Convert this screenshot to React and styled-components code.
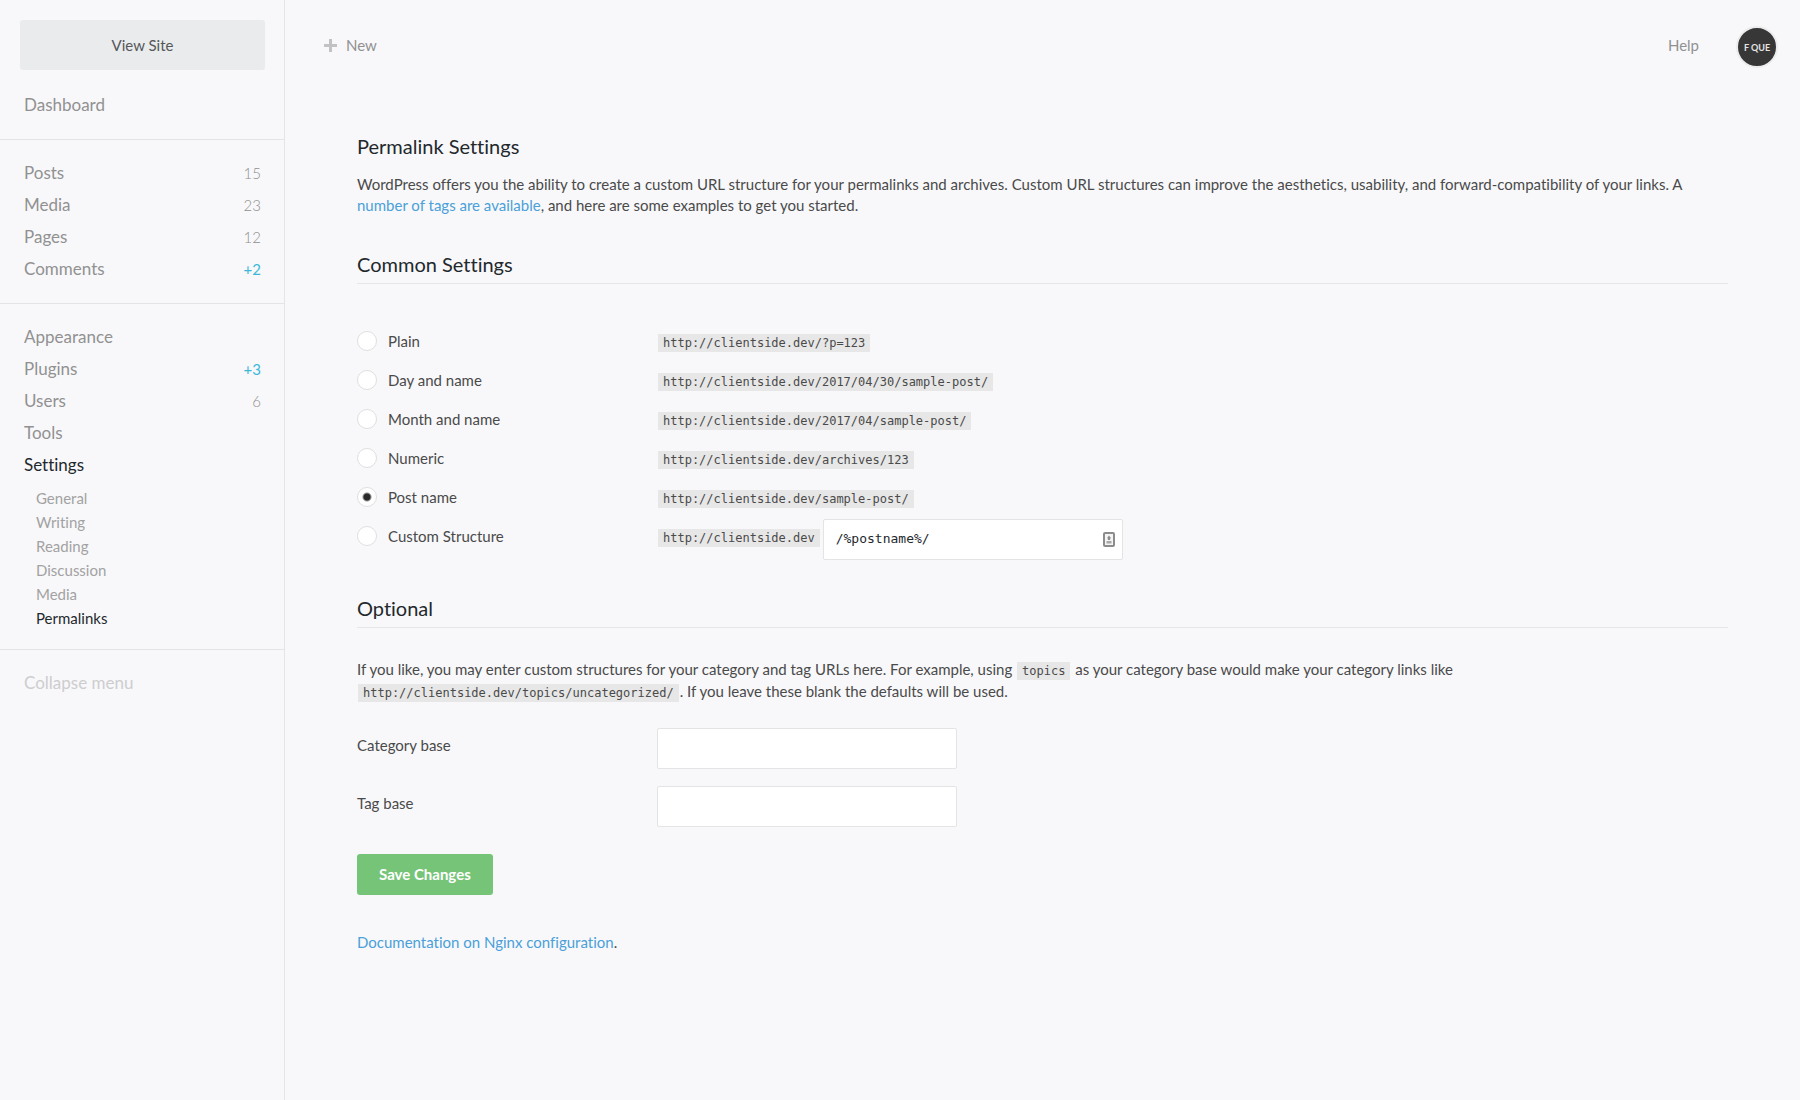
import React, { useState } from "react";
import styled, { createGlobalStyle } from "styled-components";

const sans = `Lato, "Open Sans", sans-serif`;
const mono = `"DejaVu Sans Mono", "Liberation Mono", monospace`;

const GlobalStyle = createGlobalStyle`
  *, *::before, *::after { box-sizing: border-box; }
  body {
    margin: 0;
    background: #f8f8fa;
    color: #4a4a4a;
    font: 400 15px/21px ${sans};
    font-variant-ligatures: none;
  }
`;

const Page = styled.div`
  display: flex;
  min-height: 100vh;
`;

const Sidebar = styled.aside`
  flex: 0 0 285px;
  padding-top: 20px;
  border-right: 1px solid #e3e4e6;
`;

const ViewSite = styled.a`
  display: block;
  margin: 0 19px 0 20px;
  border-radius: 3px;
  background: #e9ebec;
  color: #555759;
  line-height: 50px;
  text-align: center;
  text-decoration: none;
`;

const Menu = styled.nav`
  padding-top: 2px;
`;

const MenuSection = styled.ul`
  margin: 0;
  padding: 17px 23px 18px 24px;
  list-style: none;

  & + & {
    border-top: 1px solid #e3e4e6;
  }
`;

const MenuLink = styled.a`
  display: flex;
  justify-content: space-between;
  color: ${(p) => (p.$active ? "#23282d" : p.$faint ? "#cdcdcf" : "#919191")};
  font-size: 17px;
  line-height: 32px;
  text-decoration: none;
`;

const Count = styled.span`
  color: ${(p) => (p.$alert ? "#3bb8d8" : "#8f8f8f")};
  font-size: 15px;
  font-weight: ${(p) => (p.$alert ? 400 : 300)};
`;

const SubMenu = styled.ul`
  margin: 0;
  padding: 5px 0 1px 12px;
  list-style: none;
`;

const SubLink = styled.a`
  display: block;
  color: ${(p) => (p.$active ? "#23282d" : "#a2a2a2")};
  line-height: 24px;
  text-decoration: none;
`;

const Main = styled.div`
  flex: 1;
  min-width: 0;
`;

const TopBar = styled.header`
  display: flex;
  align-items: center;
  height: 94px;
  padding: 0 22px 0 39px;
`;

const TopLink = styled.a`
  display: flex;
  align-items: center;
  gap: 9px;
  padding-bottom: 4px;
  color: #919191;
  text-decoration: none;
`;

const TopRight = styled.div`
  display: flex;
  align-items: center;
  gap: 37px;
  margin-left: auto;
`;

const Avatar = styled.a`
  display: grid;
  place-items: center;
  width: 42px;
  height: 42px;
  border: 2px solid #ececee;
  border-radius: 50%;
  background: #373737;
  color: #e4e4e4;
  font-size: 9px;
  font-weight: 700;
  text-decoration: none;
`;

const Content = styled.form`
  padding: 38px 72px 60px;
`;

const Title = styled.h1`
  margin: 0 0 14px;
  color: #23282d;
  font-size: 20px;
  font-weight: 400;
  line-height: 28px;
`;

const SectionTitle = styled(Title).attrs({ as: "h2" })`
  margin: 34px 0 0;
  padding-bottom: 5px;
  border-bottom: 1px solid #e5e6e8;
`;

const Text = styled.p`
  margin: 0;
`;

const CodeText = styled(Text)`
  margin: 30px 0 26px;
  line-height: 22px;
`;

const Link = styled.a`
  color: #4aa0d8;
  text-decoration: none;
`;

const Code = styled.code`
  margin: 0 1px;
  padding: 2px 5px;
  background: #e7e7e7;
  color: #4a4a4a;
  font: 12px ${mono};
`;

const Options = styled.div`
  padding-top: 38px;
`;

const OptionRow = styled.div`
  display: grid;
  grid-template-columns: 300px 1fr;
  line-height: 39px;
`;

const OptionLabel = styled.label`
  display: flex;
  align-items: center;
  align-self: start;
  gap: 11px;
`;

const Radio = styled.input.attrs({ type: "radio" })`
  appearance: none;
  width: 20px;
  height: 20px;
  margin: 0 0 2px;
  border: 1px solid #dedfe1;
  border-radius: 50%;
  background: #fff;

  &:checked {
    background: radial-gradient(circle, #2b2b2b 3px, #fff 5px);
  }
`;

const Structure = styled.div`
  display: flex;
  align-items: flex-start;
  gap: 2px;
`;

const TextInput = styled.input.attrs({ type: "text" })`
  width: 300px;
  height: 41px;
  padding: 0 12px 2px;
  border: 1px solid #e3e4e6;
  border-radius: 2px;
  background: #fff;
  color: #23282d;
  font: 13px ${mono};
`;

const InputWrap = styled.div`
  position: relative;
  display: flex;
  padding-top: 2px;
`;

const FillIcon = styled.svg`
  position: absolute;
  top: 15px;
  right: 8px;
`;

const Field = styled.div`
  display: grid;
  grid-template-columns: 300px 1fr;
  margin-bottom: 17px;
`;

const FieldLabel = styled.label`
  line-height: 34px;
`;

const Save = styled.button`
  display: block;
  height: 41px;
  margin: 27px 0 37px;
  padding: 0 22px 2px;
  border: 0;
  border-radius: 3px;
  background: #76c478;
  color: #fff;
  font: 700 15px ${sans};
`;

const contentMenu = [
  { name: "Posts", count: "15" },
  { name: "Media", count: "23" },
  { name: "Pages", count: "12" },
  { name: "Comments", count: "+2" },
];

const adminMenu = [
  { name: "Appearance" },
  { name: "Plugins", count: "+3" },
  { name: "Users", count: "6" },
  { name: "Tools" },
  { name: "Settings", active: true },
];

const settingsMenu = ["General", "Writing", "Reading", "Discussion", "Media", "Permalinks"];

const structures = [
  { name: "Plain", path: "/?p=123" },
  { name: "Day and name", path: "/2017/04/30/sample-post/" },
  { name: "Month and name", path: "/2017/04/sample-post/" },
  { name: "Numeric", path: "/archives/123" },
  { name: "Post name", path: "/sample-post/" },
  { name: "Custom Structure", path: "", custom: true },
];

function MenuItem({ item, children }) {
  return (
    <li>
      <MenuLink href="#" $active={item.active}>
        {item.name}
        {item.count && <Count $alert={item.count.startsWith("+")}>{item.count}</Count>}
      </MenuLink>
      {children}
    </li>
  );
}

export default function App() {
  const [selected, setSelected] = useState("Post name");

  return (
    <>
      <GlobalStyle />
      <Page>
        <Sidebar>
          <ViewSite href="#">View Site</ViewSite>
          <Menu>
            <MenuSection>
              <MenuItem item={{ name: "Dashboard" }} />
            </MenuSection>
            <MenuSection>
              {contentMenu.map((item) => (
                <MenuItem key={item.name} item={item} />
              ))}
            </MenuSection>
            <MenuSection>
              {adminMenu.map((item) => (
                <MenuItem key={item.name} item={item}>
                  {item.active && (
                    <SubMenu>
                      {settingsMenu.map((name) => (
                        <li key={name}>
                          <SubLink href="#" $active={name === "Permalinks"}>{name}</SubLink>
                        </li>
                      ))}
                    </SubMenu>
                  )}
                </MenuItem>
              ))}
            </MenuSection>
            <MenuSection>
              <li>
                <MenuLink href="#" $faint>Collapse menu</MenuLink>
              </li>
            </MenuSection>
          </Menu>
        </Sidebar>

        <Main>
          <TopBar>
            <TopLink href="#">
              <svg width="13" height="13" viewBox="0 0 13 13" aria-hidden="true">
                <path d="M5 0h3v5h5v3H8v5H5V8H0V5h5z" fill="#c2c2c4" />
              </svg>
              New
            </TopLink>
            <TopRight>
              <TopLink href="#">Help</TopLink>
              <Avatar href="#">F QUE</Avatar>
            </TopRight>
          </TopBar>

          <Content onSubmit={(e) => e.preventDefault()}>
            <Title>Permalink Settings</Title>
            <Text>
              WordPress offers you the ability to create a custom URL structure for your permalinks and
              archives. Custom URL structures can improve the aesthetics, usability, and
              forward-compatibility of your links. A <Link href="#">number of tags are available</Link>,
              and here are some examples to get you started.
            </Text>

            <SectionTitle>Common Settings</SectionTitle>
            <Options>
              {structures.map(({ name, path, custom }) => (
                <OptionRow key={name}>
                  <OptionLabel>
                    <Radio
                      name="structure"
                      checked={selected === name}
                      onChange={() => setSelected(name)}
                    />
                    {name}
                  </OptionLabel>
                  <Structure>
                    <span>
                      <Code>http://clientside.dev{path}</Code>
                    </span>
                    {custom && (
                      <InputWrap>
                        <TextInput aria-label="Custom structure" defaultValue="/%postname%/" />
                        <FillIcon width="12" height="15" viewBox="0 0 12 15" aria-hidden="true">
                          <rect x="1" y="1" width="10" height="13" rx="1" fill="#f4f4f4" stroke="#8c8c8c" strokeWidth="2" />
                          <path d="M6 3.5l1.6 2L7 8H5l-.6-2.500z" fill="#8c8c8c" />
                          <path d="M3.500 9h5v2.500h-5z" fill="#a8a8a8" />
                        </FillIcon>
                      </InputWrap>
                    )}
                  </Structure>
                </OptionRow>
              ))}
            </Options>

            <SectionTitle>Optional</SectionTitle>
            <CodeText>
              If you like, you may enter custom structures for your category and tag URLs here. For
              example, using <Code>topics</Code> as your category base would make your category links
              like <Code>http://clientside.dev/topics/uncategorized/</Code>. If you leave these blank
              the defaults will be used.
            </CodeText>

            <Field>
              <FieldLabel htmlFor="category-base">Category base</FieldLabel>
              <TextInput id="category-base" />
            </Field>
            <Field>
              <FieldLabel htmlFor="tag-base">Tag base</FieldLabel>
              <TextInput id="tag-base" />
            </Field>

            <Save type="submit">Save Changes</Save>
            <Text>
              <Link href="#">Documentation on Nginx configuration</Link>.
            </Text>
          </Content>
        </Main>
      </Page>
    </>
  );
}
